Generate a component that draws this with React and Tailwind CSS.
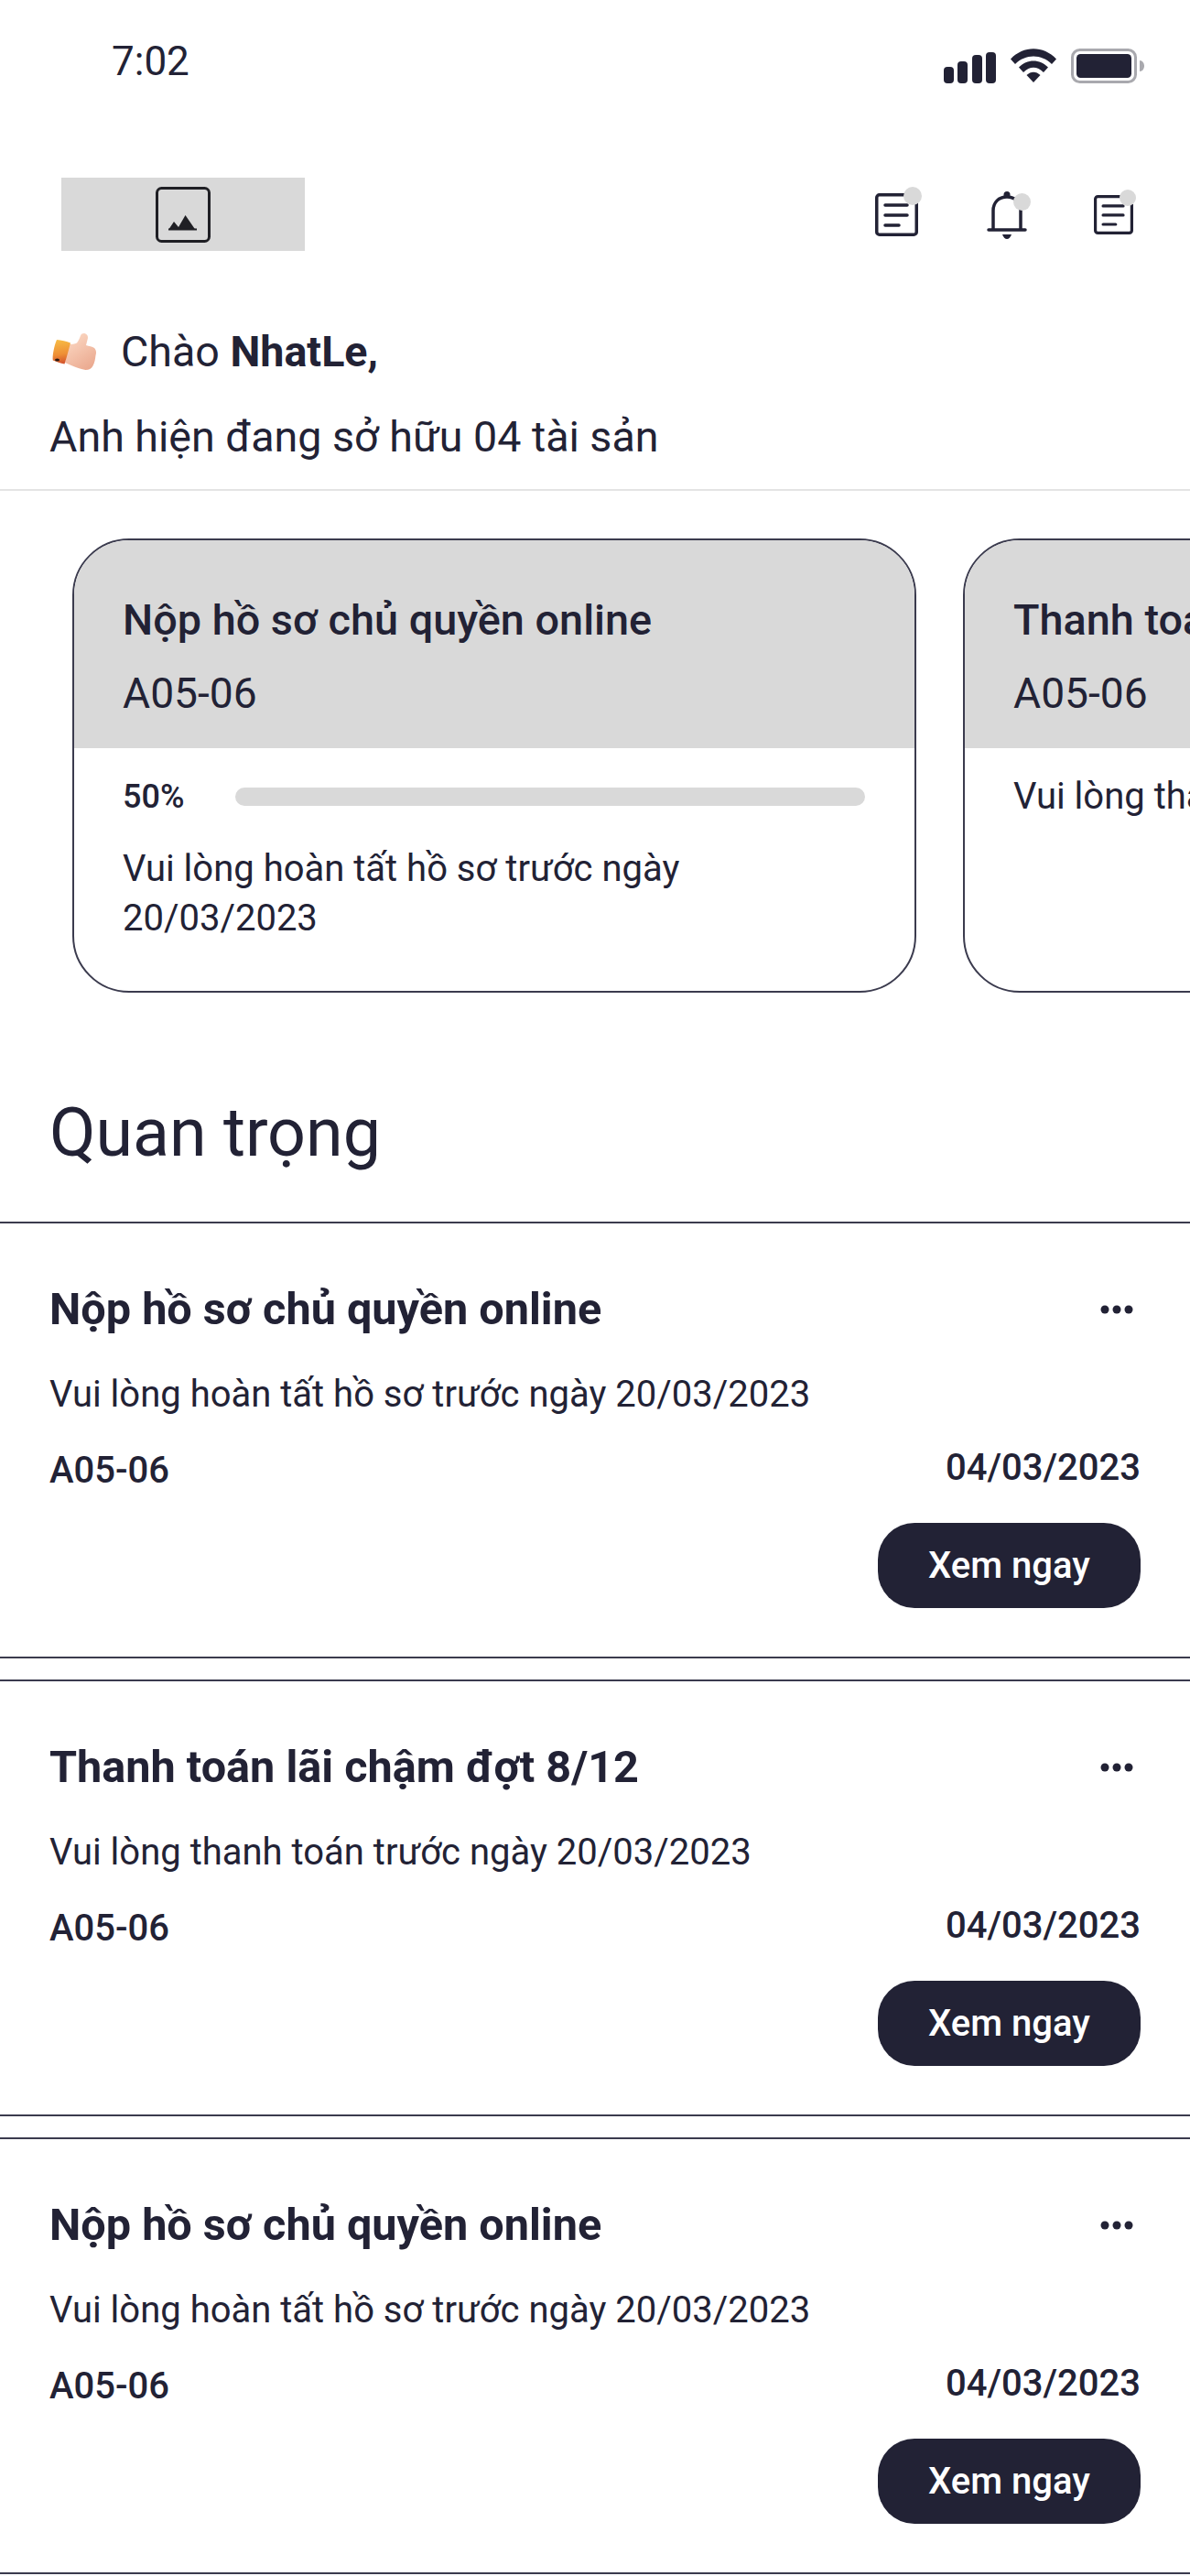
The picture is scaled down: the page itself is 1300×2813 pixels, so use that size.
const tasks = [
    { title: "Nộp hồ sơ chủ quyền online", desc: "Vui lòng hoàn tất hồ sơ trước ngày 20/03/2023" },
    { title: "Thanh toán lãi chậm đợt 8/12", desc: "Vui lòng thanh toán trước ngày 20/03/2023" },
    { title: "Nộp hồ sơ chủ quyền online", desc: "Vui lòng hoàn tất hồ sơ trước ngày 20/03/2023" },
];

const StatusIcons = () => (
    <div className="flex items-start gap-[16px] mt-[12px]">
        <svg width="57" height="38" viewBox="0 0 57 38" className="block">
            <rect x="0" y="20" width="11" height="18" rx="4" fill="#222235" />
            <rect x="15" y="14" width="11" height="24" rx="4" fill="#222235" />
            <rect x="31" y="7" width="11" height="31" rx="4" fill="#222235" />
            <rect x="46" y="4" width="11" height="34" rx="4" fill="#222235" />
        </svg>
        <svg width="50" height="38" viewBox="0 0 50 38" className="block">
            <path d="M0 11.5C14-3.5 36-3.500 50 11.500L45 17C34 5.500 16 5.500 5 17Z" fill="#222235" />
            <path d="M9 20.500C18 11 32 11 41 20.500L36 26C29 19 21 19 14 26Z" fill="#222235" />
            <path d="M17.500 29C22 24.500 28 24.500 32.500 29L25 37Z" fill="#222235" />
        </svg>
        <svg width="80" height="38" viewBox="0 0 80 38" className="block">
            <rect x="1.500" y="1.500" width="69" height="35" rx="8" fill="none" stroke="#a9a9ae" strokeWidth="3" />
            <rect x="6" y="6" width="60" height="26" rx="4.500" fill="#222235" />
            <path d="M75 13c3 0 5 3 5 6s-2 6-5 6Z" fill="#a9a9ae" />
        </svg>
    </div>
);

const PictureIcon = () => (
    <svg width="60" height="61" viewBox="0 0 60 61" className="block">
        <rect x="1.500" y="1.500" width="57" height="58" rx="5" fill="none" stroke="#1f1f24" strokeWidth="3" />
        <path d="M14 47l6-9 5 6 7.500-13 11 16Z" fill="#1f1f24" />
        <rect x="14" y="45.500" width="31" height="2" fill="#1f1f24" />
    </svg>
);

const DocIcon = ({ size, dotClass }) => (
    <div className={`relative ${size}`}>
        <svg viewBox="0 0 47 47" className="block w-full h-full">
            <rect x="1.750" y="1.750" width="43.500" height="43.500" rx="3" fill="none" stroke="#222235" strokeWidth="3.500" />
            <path d="M11 13h24M11 24h24M11 35h15" stroke="#222235" strokeWidth="3.500" strokeLinecap="round" fill="none" />
        </svg>
        <span className={`absolute rounded-full bg-[#d9d9d9] ${dotClass}`} />
    </div>
);

const BellIcon = () => (
    <div className="relative w-[44px] h-[53px]">
        <svg viewBox="0 0 44 53" className="block w-full h-full">
            <path d="M7 43V22C7 13 13 7 22 7s15 6 15 15v21" fill="none" stroke="#222235" strokeWidth="3.500" />
            <circle cx="22" cy="4.500" r="3.500" fill="#222235" />
            <path d="M2 43h40" stroke="#222235" strokeWidth="3.500" strokeLinecap="round" />
            <path d="M17 48h10c-1 3-3 5-5 5s-4-2-5-5Z" fill="#222235" />
        </svg>
        <span className="absolute left-[29px] top-[3px] w-[19px] h-[19px] rounded-full bg-[#d9d9d9]" />
    </div>
);

const ThumbIcon = () => (
    <svg width="48" height="40" viewBox="0 0 48 40" className="block shrink-0">
        <defs>
            <linearGradient id="cuff" x1="0.4" y1="0" x2="0.5" y2="1">
                <stop offset="0" stopColor="#f7bb45" />
                <stop offset="0.6" stopColor="#ee8f35" />
                <stop offset="1" stopColor="#d2502c" />
            </linearGradient>
            <linearGradient id="skin" x1="0.2" y1="0" x2="0.8" y2="1">
                <stop offset="0" stopColor="#fcd9c4" />
                <stop offset="1" stopColor="#eaa88e" />
            </linearGradient>
        </defs>
        <path d="M17 12C21 12 25 12 27 10.500C29 8 30 5 31 2.500C32 .5 34-.3 36 .3C39 1.500 39.500 4 38.500 7C38 9 37.500 11 37 13C40 14 44 14.500 46 16C48 18 48.500 21 47.500 24C47 28 46.500 32 44.500 35.500C43 38.500 40 40 36.500 40C32 39.500 27 37.500 22 35.500L14 32Z" fill="url(#skin)" />
        <path d="M5 7C10 7.500 16 8.500 20 10.500C18 18 16 26 13.500 33.500C9 32.500 4.500 31 .8 29.500C0 25 2 14 5 7Z" fill="url(#cuff)" />
        <ellipse cx="5.500" cy="29" rx="2.500" ry="1.500" fill="#2a1a14" />
    </svg>
);

const SummaryCard = ({ title, children }) => (
    <div className="w-[922px] h-[496px] shrink-0 rounded-[62px] border-2 border-[#3b3b4e] overflow-hidden">
        <div className="h-[227px] bg-[#d9d9d9] pl-[53px] pt-[59px]">
            <div className="text-[46.8px] leading-[56px] font-medium whitespace-nowrap">{title}</div>
            <div className="mt-[24px] text-[46.2px] leading-[56px]">A05-06</div>
        </div>
        {children}
    </div>
);

const TaskItem = ({ title, desc }) => (
    <div className="border-y-2 border-[#3b3b4e] px-[54px] pt-[66px] pb-[53px] mb-[23px] last:mb-0">
        <div className="flex items-center justify-between">
            <div className="text-[48.6px] leading-[56px] font-bold">{title}</div>
            <svg width="36" height="10" viewBox="0 0 36 10" className="block mr-2">
                <circle cx="5" cy="5" r="4.500" fill="#222235" />
                <circle cx="18" cy="5" r="4.500" fill="#222235" />
                <circle cx="31" cy="5" r="4.500" fill="#222235" />
            </svg>
        </div>
        <div className="mt-[39px] text-[40px] leading-[52px]">{desc}</div>
        <div className="mt-[28px] h-[52px] flex items-start justify-between">
            <div className="mt-[3px] text-[40px] leading-[52px] font-medium">A05-06</div>
            <div className="text-[40px] leading-[52px] font-medium">04/03/2023</div>
        </div>
        <div className="mt-[34px] flex justify-end">
            <button className="w-[287px] h-[93px] rounded-[40px] bg-[#222235] text-white text-[40px] font-medium">Xem ngay</button>
        </div>
    </div>
);

export default function App() {
    return (
        <div className="w-[1300px] bg-white text-[#222235] font-['Roboto',sans-serif] overflow-hidden">
            <div className="flex items-start justify-between h-[194px] pl-[122px] pr-[50px] pt-[41px]">
                <div className="text-[44px] leading-[52px]">7:02</div>
                <StatusIcons />
            </div>

            <div className="flex items-center justify-between h-[80px] pl-[67px] pr-[62px]">
                <div className="w-[266px] h-[80px] bg-[#d9d9d9] flex items-center justify-center">
                    <PictureIcon />
                </div>
                <div className="flex items-center">
                    <DocIcon size="w-[47px] h-[47px]" dotClass="left-[31px] -top-[7px] w-5 h-5" />
                    <div className="ml-[75px]"><BellIcon /></div>
                    <DocIcon size="ml-[73px] w-[43px] h-[43px]" dotClass="left-[28px] -top-[6px] w-[18px] h-[18px]" />
                </div>
            </div>

            <div className="mt-[82px] pl-[57px] flex items-center text-[46.600px] leading-[56px]">
                <ThumbIcon />
                <span className="ml-[27px]">Chào <b className="font-bold">NhatLe,</b></span>
            </div>
            <div className="mt-[37px] pl-[54px] text-[46.600px] leading-[56px]">Anh hiện đang sở hữu 04 tài sản</div>
            <div className="mt-[29px] h-[2px] bg-[#e4e4e4]" />

            <div className="flex gap-[51px] pl-[79px] pt-[52px] overflow-hidden">
                <SummaryCard title="Nộp hồ sơ chủ quyền online">
                    <div className="pl-[53px] pr-[54px] pt-[30px]">
                        <div className="flex items-center h-[46px]">
                            <div className="w-[123px] text-[36px] font-medium">50%</div>
                            <div className="w-[689px] h-[20px] rounded-[10px] bg-[#d9d9d9]" />
                        </div>
                        <div className="mt-[29px] text-[40px] leading-[54px]">Vui lòng hoàn tất hồ sơ trước ngày<br />20/03/2023</div>
                    </div>
                </SummaryCard>
                <SummaryCard title="Thanh toán lãi chậm đợt 8/12">
                    <div className="pl-[53px] pt-[26px] text-[40px] leading-[54px] whitespace-nowrap">Vui lòng thanh toán trước ngày</div>
                </SummaryCard>
            </div>

            <div className="mt-[111px] pl-[54px] text-[73.500px] leading-[84px]">Quan trọng</div>

            <div className="mt-[55px]">
                {tasks.map((task, index) => (
                    <TaskItem key={index} title={task.title} desc={task.desc} />
                ))}
            </div>
        </div>
    );
}
